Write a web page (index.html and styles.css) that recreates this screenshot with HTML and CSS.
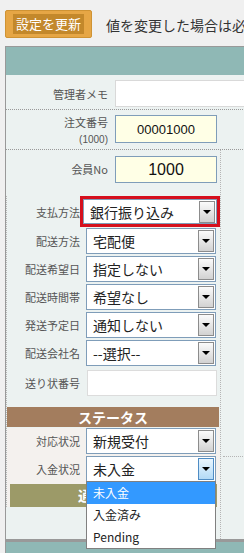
FILE: index.html
```html
<!DOCTYPE html>
<html lang="ja">

<head>
    <meta charset="UTF-8">
    <meta name="viewport" content="width=device-width, initial-scale=1.0">
    <title>受注編集</title>
    <link rel="stylesheet" href="styles.css">
</head>

<body>
    <div class="page">

        <!-- Toolbar -->
        <div class="toolbar">
            <div class="btn-update"><span>設定を更新</span></div>
            <span class="notice">値を変更した場合は必ず設定を更新してください</span>
        </div>

        <div class="panel">
            <div class="panel-head"></div>

            <div class="row row-memo">
                <div class="label">管理者メモ</div>
                <div class="memo-box"></div>
            </div>

            <div class="row row-order">
                <div class="label label-stack">
                    <span>注文番号</span>
                    <small>(1000)</small>
                </div>
                <div class="num-box">00001000</div>
            </div>

            <div class="columns">
                <div class="main-col">
                    <div class="row row-member">
                        <div class="label">会員No</div>
                        <div class="num-box num-big">1000</div>
                    </div>

                    <div class="lower">
                        <!-- Shipping fields -->
                        <div class="field field-alert">
                            <div class="field-label">支払方法</div>
                            <div class="alert-frame">
                                <div class="select select-wide">
                                    <span class="select-text">銀行振り込み</span>
                                    <span class="select-btn"></span>
                                </div>
                            </div>
                        </div>
                        <div class="field">
                            <div class="field-label">配送方法</div>
                            <div class="select">
                                <span class="select-text">宅配便</span>
                                <span class="select-btn"></span>
                            </div>
                        </div>
                        <div class="field">
                            <div class="field-label">配送希望日</div>
                            <div class="select">
                                <span class="select-text">指定しない</span>
                                <span class="select-btn"></span>
                            </div>
                        </div>
                        <div class="field">
                            <div class="field-label">配送時間帯</div>
                            <div class="select">
                                <span class="select-text">希望なし</span>
                                <span class="select-btn"></span>
                            </div>
                        </div>
                        <div class="field">
                            <div class="field-label">発送予定日</div>
                            <div class="select">
                                <span class="select-text">通知しない</span>
                                <span class="select-btn"></span>
                            </div>
                        </div>
                        <div class="field">
                            <div class="field-label">配送会社名</div>
                            <div class="select">
                                <span class="select-text">--選択--</span>
                                <span class="select-btn"></span>
                            </div>
                        </div>
                        <div class="field field-input">
                            <div class="field-label">送り状番号</div>
                            <div class="text-box"></div>
                        </div>

                        <!-- Status -->
                        <div class="status-head">ステータス</div>
                        <div class="status">
                            <div class="field">
                                <div class="field-label">対応状況</div>
                                <div class="select">
                                    <span class="select-text">新規受付</span>
                                    <span class="select-btn"></span>
                                </div>
                            </div>
                            <div class="field">
                                <div class="field-label">入金状況</div>
                                <div class="select select-open">
                                    <span class="select-text">未入金</span>
                                    <span class="select-btn"></span>
                                    <ul class="dropdown">
                                        <li class="active">未入金</li>
                                        <li>入金済み</li>
                                        <li>Pending</li>
                                    </ul>
                                </div>
                            </div>
                            <div class="notify-bar"><span>通知</span></div>
                        </div>
                    </div>
                </div>

                <div class="side-col">
                    <div class="side-rule"></div>
                </div>
            </div>

            <div class="panel-foot"></div>
        </div>

    </div>
</body>

</html>
```

FILE: styles.css
```css
* {
    margin: 0;
    padding: 0;
    box-sizing: border-box;
}

html,
body {
    overflow: hidden;
}

body {
    font-family: "Noto Sans CJK JP", "Liberation Sans", sans-serif;
    background-color: #f0f0f0;
    color: #333;
}

.page {
    width: 244px;
    height: 553px;
    overflow: hidden;
}

/* Toolbar */
.toolbar {
    height: 46px;
    padding: 10px 0 0 5px;
    display: flex;
    align-items: flex-start;
    white-space: nowrap;
}

.btn-update {
    flex-shrink: 0;
    width: 87px;
    height: 28px;
    background-color: #e6a645;
    border: 1px solid #cf9334;
    border-radius: 2px;
    display: flex;
    align-items: center;
    justify-content: center;
}

.btn-update span {
    background-color: #c3882b;
    color: #fff;
    font-size: 13px;
    line-height: 20px;
    padding: 0 3px;
}

.notice {
    flex-shrink: 0;
    margin-left: 14px;
    font-size: 14px;
    line-height: 30px;
    color: #333;
}

/* Panel */
.panel {
    width: 320px;
    margin-left: 5px;
    border-top: 1px solid #999;
    border-left: 1px solid #999;
    background-color: #ecf2f1;
}

.panel-head {
    height: 28px;
    background-color: #8fb8b5;
}

.row {
    display: flex;
}

.label {
    flex-shrink: 0;
    width: 102px;
    margin-right: 7px;
    text-align: right;
    font-size: 11px;
    color: #555;
    line-height: 16px;
}

.row-memo {
    height: 35px;
    padding: 5px 0 2px;
    align-items: center;
    border-bottom: 1px dotted #999;
}

.memo-box {
    flex: 1;
    height: 27px;
    background-color: #fff;
    border: 1px solid #d9d9d9;
}

.row-order {
    height: 40px;
    padding-top: 4px;
    border-bottom: 1px dotted #999;
}

.label-stack {
    display: flex;
    flex-direction: column;
    align-items: flex-end;
}

.label-stack small {
    font-size: 10px;
    line-height: 14px;
    margin-top: 3px;
    font-family: "Liberation Sans", sans-serif;
}

.row-order .num-box {
    margin-top: 1px;
    height: 28px;
}

.num-box {
    flex-shrink: 0;
    width: 102px;
    height: 27px;
    background-color: #ffffe6;
    border: 1px solid #7f9db9;
    font-family: "Liberation Sans", sans-serif;
    font-size: 13px;
    color: #111;
    display: flex;
    align-items: center;
    justify-content: center;
}

.num-big {
    font-size: 16px;
}

.columns {
    display: flex;
}

.main-col {
    flex-shrink: 0;
    width: 214px;
    padding-bottom: 32px;
}

.side-col {
    flex: 1;
    border-left: 1px dotted #b5b5b5;
    padding-top: 306px;
}

.side-rule {
    border-top: 1px dotted #b5b5b5;
    margin-left: 2px;
}

.row-member {
    height: 46px;
    padding-top: 6px;
    align-items: flex-start;
}

.row-member .label {
    line-height: 27px;
}

/* Fields */
.lower {
    border-left: 1px dotted #b5b5b5;
}

.field {
    display: flex;
    align-items: center;
    margin-top: 2px;
}

.field-label {
    flex-shrink: 0;
    width: 73px;
    text-align: right;
    font-size: 11px;
    color: #555;
    margin-right: 6px;
}

.field-alert {
    margin-top: 0;
}

.field-alert .field-label {
    margin-right: 0;
}

.alert-frame {
    flex-shrink: 0;
    border: 3px solid #d5101d;
}

.field-alert + .field {
    margin-top: 1px;
}

.select {
    flex-shrink: 0;
    position: relative;
    width: 130px;
    height: 26px;
    background-color: #fff;
    border: 1px solid #7f9db9;
    display: flex;
    align-items: center;
}

.select-wide {
    width: 134px;
    height: 25px;
}

.select-text {
    flex: 1;
    padding-left: 6px;
    font-size: 14px;
    color: #222;
    white-space: nowrap;
}

.select-btn {
    position: relative;
    width: 16px;
    height: 22px;
    margin-right: 1px;
    border: 1px solid #8c8c8c;
    background: linear-gradient(#fbfbfb, #d2d2d2);
}

.select-btn::after {
    content: "";
    position: absolute;
    left: 3px;
    top: 8px;
    border-left: 4px solid transparent;
    border-right: 4px solid transparent;
    border-top: 4px solid #000;
}

.select-open .select-btn {
    border-color: #4f8cc4;
    background: linear-gradient(#eaf6fe, #b3daf6);
}

.dropdown {
    position: absolute;
    top: 24px;
    left: -1px;
    width: 130px;
    list-style: none;
    background-color: #fff;
    border: 1px solid #808080;
    z-index: 2;
}

.dropdown li {
    height: 22px;
    line-height: 22px;
    padding-left: 6px;
    font-size: 12px;
    color: #222;
}

.dropdown li.active {
    background-color: #3399ff;
    color: #fff;
}

.field-input {
    margin-top: 4px;
}

.text-box {
    flex-shrink: 0;
    width: 130px;
    height: 26px;
    margin-left: 1px;
    background-color: #fff;
    border: 1px solid #dcdcdc;
}

/* Status */
.status-head {
    margin: 11px 1px 0 0;
    height: 20px;
    background-color: #a37d5e;
    color: #fff;
    font-size: 14px;
    font-weight: bold;
    line-height: 20px;
    text-align: center;
}

.status {
    background-color: #f4f1ee;
}

.status .field:first-child {
    margin-top: 1px;
}

.notify-bar {
    margin: 2px 3px 0;
    height: 23px;
    padding-left: 68px;
    background-color: #9c9a68;
    color: #fff;
    font-size: 14px;
    font-weight: bold;
    line-height: 23px;
    overflow: hidden;
}

.panel-foot {
    height: 14px;
    border-top: 3px solid #999;
    background-color: #8fb8b5;
}
```
